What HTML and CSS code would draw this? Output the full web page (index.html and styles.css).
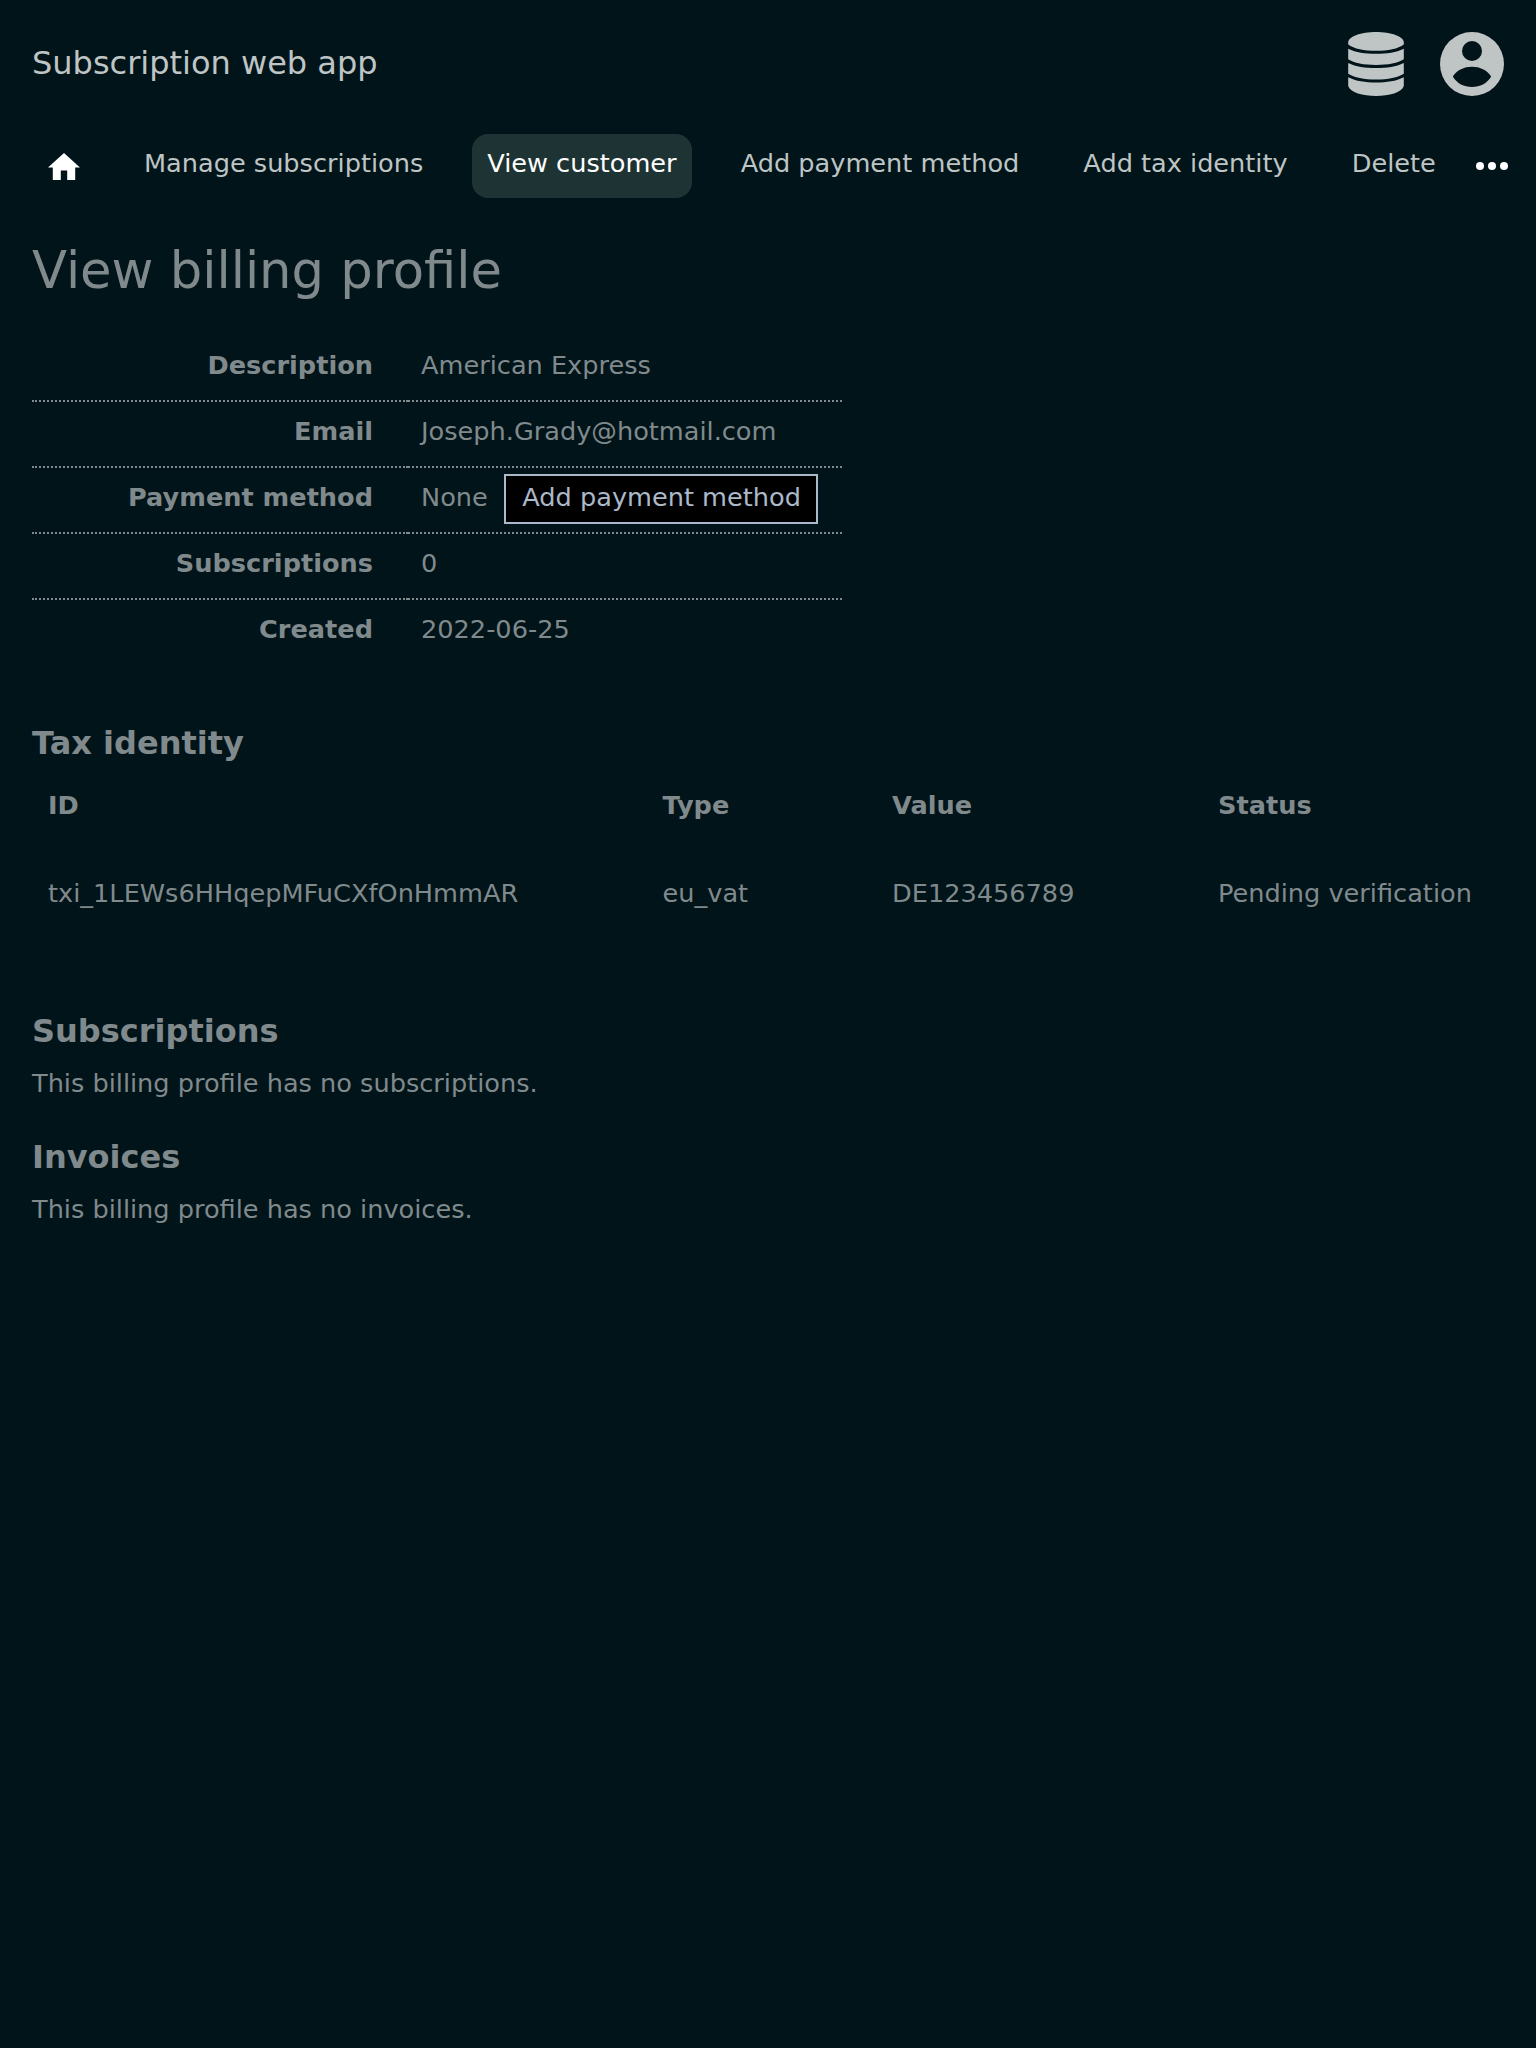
FILE: index.html
```html
<!DOCTYPE html>
<html lang="en">
<head>
<meta charset="utf-8">
<title>Subscription web app</title>
<link rel="stylesheet" href="styles.css">
</head>
<body>
<header class="header">
  <div class="app-name">Subscription web app</div>
  <div class="header-icons">
    <svg class="icon-db" viewBox="0 0 56 64"><path d="M.2 10.500C.2 4.500 13 0 28 0S55.800 4.500 55.800 10.500V12.500C50 16.800 40 18.800 28 18.800S6 16.800 .2 12.500Z"/><path d="M.2 16.700C8 20.500 17 21.700 28 21.700S48 20.500 55.800 16.700V27.300C50 31 40 33 28 33S6 31 .2 27.300Z"/><path d="M.2 31C8 35 17 36 28 36S48 35 55.800 31V41.700C50 45.500 40 47.500 28 47.500S6 45.500 .2 41.700Z"/><path d="M.2 45.300C8 49.300 17 50.500 28 50.500S48 49.300 55.800 45.300V54C54 60.500 41 64 28 64S2 60.500 .2 54Z"/></svg>
    <svg class="icon-user" viewBox="0 0 64 64"><path fill-rule="evenodd" d="M32 0a32 32 0 1 0 0 64a32 32 0 1 0 0-64ZM32 9a10 10 0 1 1 0 20a10 10 0 1 1 0-20ZM12.800 44.500C17 38 24 34.700 32 34.700S47 38 51.200 44.500C47 51.500 40 55 32 55S17 51.500 12.800 44.500Z"/></svg>
  </div>
</header>
<nav class="nav">
  <a class="nav-home"><svg class="icon-home" viewBox="2 3 20 17"><path d="M10 20v-6h4v6h5v-8h3L12 3 2 12h3v8z"/></svg></a>
  <a class="nav-item">Manage subscriptions</a>
  <a class="nav-item active">View customer</a>
  <a class="nav-item">Add payment method</a>
  <a class="nav-item">Add tax identity</a>
  <a class="nav-item">Delete</a>
  <svg class="icon-more" viewBox="0 0 32 8"><circle cx="4" cy="4" r="4"/><circle cx="16" cy="4" r="4"/><circle cx="28" cy="4" r="4"/></svg>
</nav>
<main class="content">
  <h1 class="title">View billing profile</h1>
  <table class="details">
    <tr><th>Description</th><td>American Express</td></tr>
    <tr><th>Email</th><td>Joseph.Grady@hotmail.com</td></tr>
    <tr><th>Payment method</th><td><div class="payment">None <a class="button">Add payment method</a></div></td></tr>
    <tr><th>Subscriptions</th><td>0</td></tr>
    <tr><th>Created</th><td>2022-06-25</td></tr>
  </table>
  <h2 class="heading">Tax identity</h2>
  <table class="list">
    <tr><th class="col-id">ID</th><th class="col-type">Type</th><th class="col-value">Value</th><th>Status</th></tr>
    <tr><td>txi_1LEWs6HHqepMFuCXfOnHmmAR</td><td>eu_vat</td><td>DE123456789</td><td>Pending verification</td></tr>
  </table>
  <h2 class="heading">Subscriptions</h2>
  <p class="note">This billing profile has no subscriptions.</p>
  <h2 class="heading">Invoices</h2>
  <p class="note">This billing profile has no invoices.</p>
</main>
</body>
</html>
```
FILE: styles.css
```css
* { box-sizing: border-box; }
body {
  margin: 0;
  min-height: 2048px;
  background: #001419;
  color: #808a8c;
  font: 25.6px/30px "DejaVu Sans", sans-serif;
}
.header {
  display: flex;
  justify-content: space-between;
  height: 134px;
  padding: 32px 32px 0;
  color: #bfc4c5;
}
.app-name { font-size: 32px; line-height: 38px; padding-top: 12px; }
.header-icons { display: flex; gap: 36px; fill: #bfc4c5; }
.icon-db { width: 56px; height: 64px; }
.icon-user { width: 64px; height: 64px; }
.nav {
  display: flex;
  gap: 34px;
  height: 64px;
  padding-left: 32px;
  white-space: nowrap;
  color: #bfc4c5;
}
.nav-home { width: 63px; padding: 18.5px 15px 0 16px; }
.icon-home { display: block; width: 32px; height: 27.2px; fill: #fff; }
.nav-item { padding: 14px 15px 0; border-radius: 16px; }
.nav-item.active { background: #1e3434; color: #fff; }
.icon-more { width: 32px; height: 8px; margin: 28px 0 0 -9px; fill: #fff; }
.content { padding: 42px 32px 0; }
.title { margin: 0 0 36px; font-size: 51.2px; line-height: 60px; font-weight: 400; }
.details {
  width: 810px;
  border-spacing: 0;
  table-layout: fixed;
  margin-bottom: 58px;
}
.details th, .details td {
  height: 66px;
  padding: 14px 0 0;
  vertical-align: top;
  text-align: left;
  border-bottom: 2px dotted #808a8c;
}
.details th { width: 376px; padding-right: 35px; text-align: right; }
.details td { padding-left: 13px; }
.details tr:last-child > * { border-bottom-color: transparent; }
.payment { display: flex; gap: 16.5px; height: 30px; }
.button {
  height: 50px;
  margin-top: -8px;
  padding: 6px 15px 0 16px;
  border: 2px solid #abb9c9;
  background: #000;
  color: #abb9c9;
}
.heading { margin: 0; font-size: 32px; line-height: 38px; }
.list { width: 1472px; border-spacing: 0; table-layout: fixed; margin: 14px 0 60px; }
.list th, .list td { height: 88px; padding: 14px 0 0 16px; text-align: left; vertical-align: top; }
.col-id { width: 614.5px; }
.col-type { width: 229.5px; }
.col-value { width: 326px; }
.note { margin: 18px 0 40px; }
```
